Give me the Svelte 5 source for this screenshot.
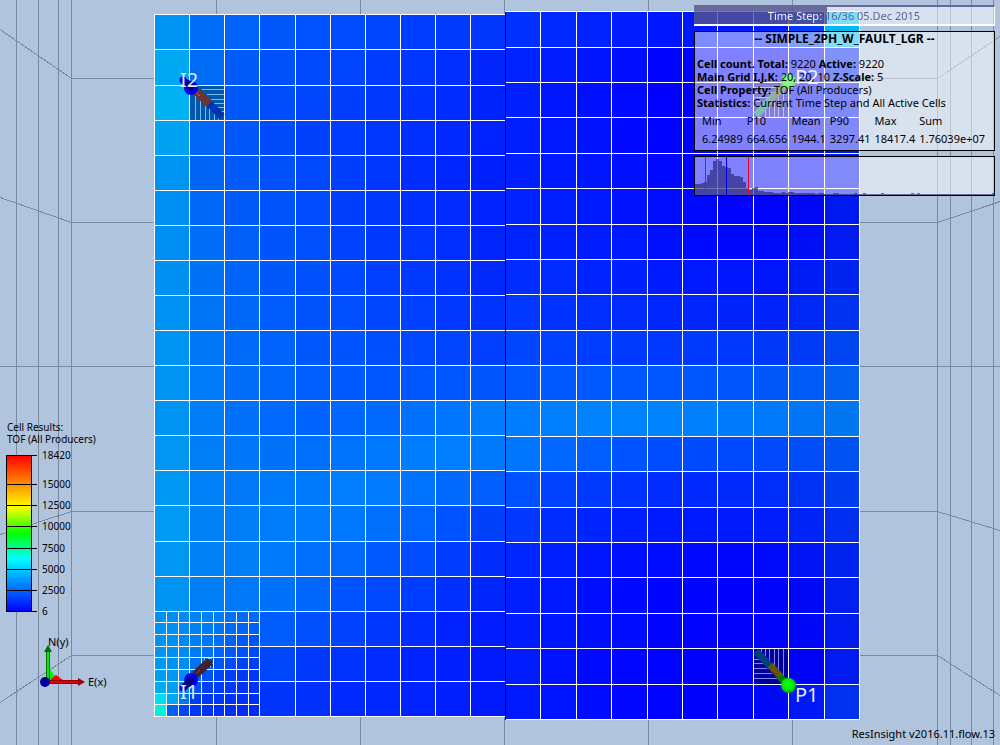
<script>
  const leftX = [154, 189, 224, 259, 295, 330, 365, 400, 435, 470, 505];
  const leftY = [14, 49, 85, 120, 155, 190, 225, 260, 295, 330, 365, 400, 435, 470, 505, 541, 576, 611, 646, 681, 716];
  const rightX = [505, 540, 576, 611, 647, 682, 717, 753, 788, 824, 859];
  const rightY = [11, 47, 82, 117, 153, 188, 224, 259, 294, 330, 365, 400, 436, 471, 507, 542, 577, 613, 648, 684, 719];
  const fineX = [154, 166, 178, 189, 201, 213, 224, 236, 248, 259];
  const fineY = [611, 622, 634, 646, 657, 669, 681, 693, 704, 716];

  const leftCells = [
    [148, 110, 98, 88, 82, 75, 68, 62, 58, 54],
    [168, 108, 90, 80, 72, 68, 60, 54, 46, 38],
    [178, 104, 88, 76, 68, 62, 56, 50, 44, 36],
    [162, 102, 86, 74, 66, 60, 54, 48, 40, 34],
    [148, 100, 90, 80, 72, 62, 54, 44, 38, 32],
    [142, 104, 90, 82, 75, 62, 56, 48, 42, 34],
    [142, 110, 96, 84, 78, 66, 58, 52, 46, 38],
    [144, 114, 100, 88, 80, 72, 64, 58, 50, 42],
    [146, 118, 104, 92, 84, 78, 70, 64, 56, 52],
    [148, 120, 106, 98, 88, 84, 78, 72, 68, 64],
    [148, 122, 110, 102, 94, 90, 86, 86, 86, 86],
    [148, 124, 112, 104, 100, 102, 106, 112, 118, 124],
    [150, 126, 118, 114, 112, 116, 120, 124, 126, 122],
    [152, 128, 120, 120, 122, 126, 122, 116, 106, 94],
    [154, 130, 126, 124, 124, 120, 112, 100, 84, 66],
    [150, 130, 126, 122, 112, 104, 90, 76, 60, 44],
    [148, 126, 120, 114, 102, 84, 72, 62, 48, 38],
    [146, 126, 106, 92, 78, 66, 54, 44, 34, 28],
    [150, 110, 70, 70, 56, 50, 42, 36, 32, 26],
    [160, 60, 50, 52, 48, 42, 38, 34, 30, 26]
  ];
  const rightCells = [
    [48, 40, 34, 28, 22, 24, 24, 34, 60, 185],
    [36, 28, 20, 14, 4, 4, 2, 4, 14, 36],
    [32, 22, 16, 10, 0, 0, 0, 0, 8, 22],
    [30, 24, 18, 8, 2, 0, 0, 0, 6, 18],
    [32, 26, 22, 16, 8, 4, 2, 2, 6, 20],
    [36, 30, 26, 18, 14, 8, 4, 2, 8, 24],
    [36, 32, 28, 24, 16, 10, 8, 10, 14, 26],
    [44, 42, 36, 32, 26, 24, 22, 22, 28, 36],
    [56, 50, 46, 42, 38, 38, 36, 36, 40, 50],
    [70, 66, 62, 58, 56, 58, 56, 56, 60, 70],
    [88, 90, 88, 86, 86, 88, 86, 88, 92, 96],
    [124, 128, 130, 130, 130, 128, 122, 120, 118, 118],
    [118, 104, 94, 84, 76, 74, 72, 72, 76, 82],
    [82, 66, 58, 50, 44, 42, 42, 44, 50, 60],
    [56, 44, 36, 30, 26, 24, 24, 28, 36, 46],
    [38, 30, 22, 16, 12, 8, 6, 10, 20, 36],
    [30, 24, 14, 8, 4, 4, 0, 2, 8, 30],
    [28, 22, 16, 12, 4, 2, 0, 2, 6, 26],
    [28, 18, 10, 6, 2, 0, 0, 0, 2, 26],
    [26, 20, 12, 6, 2, 0, 2, 8, 24, 48]
  ];
  const fineCells = [
    [146, 142, 138, 132, 128, 124, 112, 108, 104],
    [146, 142, 138, 130, 124, 118, 106, 100, 96],
    [146, 142, 136, 126, 118, 110, 98, 90, 84],
    [148, 144, 138, 122, 112, 100, 88, 80, 74],
    [152, 146, 140, 112, 98, 86, 76, 66, 60],
    [158, 150, 140, 100, 80, 72, 62, 56, 54],
    [172, 160, 140, 80, 64, 60, 56, 52, 50],
    [222, 168, 120, 60, 56, 54, 50, 48, 46],
    [240, 96, 70, 56, 50, 48, 46, 44, 44]
  ];

  const leftBlue = [242, 246, 248, 250, 252, 253, 254, 255, 255, 252];
  const rightBlue = [255, 255, 255, 255, 255, 253, 252, 250, 246, 240];
  const fineBlue = [240, 241, 242, 243, 244, 245, 245, 245, 245];

  const blocks = [
    { xs: leftX, ys: leftY, cells: leftCells, blue: leftBlue },
    { xs: rightX, ys: rightY, cells: rightCells, blue: rightBlue },
    { xs: fineX, ys: fineY, cells: fineCells, blue: fineBlue }
  ];

  const boxVerticals = [16, 38, 58, 71, 216, 360, 504, 648, 792, 937, 950, 971, 993];
  const boxLevels = [
    [29, 78, 36],
    [197, 222, 201],
    [366, 366, 366],
    [534, 511, 530],
    [702, 655, 695]
  ];

  const ticks = [
    [0, '18420'], [29, '15000'], [50, '12500'], [71, '10000'],
    [93, '7500'], [114, '5000'], [135, '2500'], [156, '6']
  ];

  const stats = [
    ['Min', '6.24989'], ['P10', '664.656'], ['Mean', '1944.1'],
    ['P90', '3297.41'], ['Max', '18417.4'], ['Sum', '1.76039e+07']
  ];

  const dense = [12, 12, 13, 14, 21, 26, 35, 37, 35, 30, 29, 28, 22, 20, 20, 19, 14, 8, 6, 8, 9, 5, 5, 4, 4, 4, 3, 3, 3, 4, 3, 4, 4, 3, 3, 3, 3, 3, 3, 3, 2, 3, 3, 2, 2, 2, 3, 3];
  const sparse = [53, 56, 62, 72, 74, 99];
  const bars = Array.from({ length: 100 }, (_, i) => dense[i] ?? (sparse.includes(i) ? 3 : 2));

  const step = 16;
  const steps = 36;
  const done = (step / steps) * 100;
</script>

<main class="view">
  <svg class="scene" viewBox="0 0 1000 745" role="img" aria-label="Reservoir grid seen from above">
    <defs>
      <radialGradient id="prod" cx="45%" cy="40%" r="60%">
        <stop offset="0" stop-color="#19ff19" />
        <stop offset="0.6" stop-color="#00ea00" />
        <stop offset="1" stop-color="#00b000" />
      </radialGradient>
    </defs>

    <g class="box">
      {#each boxVerticals as x}
        <path d="M{x + 0.5} 0V745" />
      {/each}
      {#each boxLevels as [a, y, b]}
        <path d="M0 {a + 0.5}L71.5 {y + 0.5}H937.5L1000 {b + 0.5}" />
      {/each}
    </g>

    {#each blocks as block}
      <g shape-rendering="crispEdges">
        {#each block.cells as row, r}
          {#each row as green, c}
            <rect
              x={block.xs[c]}
              y={block.ys[r]}
              width={block.xs[c + 1] - block.xs[c]}
              height={block.ys[r + 1] - block.ys[r]}
              fill="rgb(0,{green},{green === 240 ? 218 : block.blue[c]})"
            />
          {/each}
        {/each}
      </g>
    {/each}

    <g shape-rendering="crispEdges">
      <rect x="190" y="86" width="34" height="34" fill="#0056a8" />
      <path class="mesh ice" d="M195.5 96V120M200.5 100V120M205.5 104V120M209.5 109V120M214.5 113V120M218.5 118V120M202 89.5H224M207 94.5H224M211 99.5H224M214 103.5H224M218 107.5H224M222 111.5H224" />
      <rect x="754" y="649" width="34" height="35" fill="#00009c" />
      <path class="mesh" d="M761.5 649V654M765.5 649V658M769.5 649V662M774.5 649V667M778.5 649V672M783.5 649V676M754 659.5H759M754 663.5H763M754 668.5H767M754 673.5H772M754 678.5H777" />
      <rect x="754" y="83" width="34" height="34" fill="#0000b0" />
      <path class="mesh" d="M765.5 110V117M769.5 106V117M774.5 101V117M778.5 97V117M783.5 92V117M754 87.5H779M754 92.5H775M754 97.5H770M754 101.5H766M754 106.5H762" />
      <rect x="204" y="658" width="9" height="10" fill="#0a3fae" />
      <path class="mesh ice" d="M204.5 657V661M206 658.5H212M209 663.5H213M210.5 664V668" />
    </g>

    {#each blocks as block}
      <g class="grid">
        {#each block.xs as x}
          <path d="M{x + 0.5} {block.ys[0]}V{block.ys[block.ys.length - 1] + 1}" />
        {/each}
        {#each block.ys as y}
          <path d="M{block.xs[0]} {y + 0.5}H{block.xs[block.xs.length - 1] + 1}" />
        {/each}
      </g>
    {/each}
    <path d="M505.5 12V720" stroke="#00001c" shape-rendering="crispEdges" />

    <g fill="none" stroke-width="7">
      <path d="M208 102L222 117" stroke="#0032b4" />
      <path d="M196 91L209 104" stroke="#6b3430" stroke-width="8" />
      <path d="M197 93L200 96" stroke="#b06a5c" stroke-width="1" />
      <path d="M183 80L191 88" stroke="#0000c8" />
      <circle cx="183" cy="80" r="3.5" fill="#0000e6" />
      <circle cx="191" cy="88" r="7" fill="#0000f0" />
      <path d="M186 82L193 89" stroke="#000078" />

      <path d="M195 675L210 661" stroke="#44202f" stroke-width="8" />
      <path d="M197 673L200 670" stroke="#9a4c74" stroke-width="1" />
      <circle cx="183" cy="688" r="3.5" fill="#0000e6" />
      <circle cx="191" cy="680" r="7" fill="#0000f0" />
      <path d="M184 687L193 679" stroke="#000078" />

      <path d="M756 651L771 667" stroke="#00407c" />
      <path d="M770 665L781 677" stroke="#625500" />
      <path d="M779 676L786 683" stroke="#008000" />
      <circle cx="788.5" cy="685.5" r="7.5" fill="url(#prod)" />

      <path d="M756 115L771 99" stroke="#007c78" />
      <path d="M771 99L788 82" stroke="#2c5a3c" />
      <circle cx="788.5" cy="81.5" r="7.5" fill="url(#prod)" />
    </g>

    <g class="well">
      <text x="180" y="87">I2</text>
      <text x="180" y="699">I1</text>
      <text x="795" y="702">P1</text>
      <text x="795" y="84">P2</text>
    </g>
  </svg>

  <div class="info">
    <div
      class="progress"
      role="progressbar"
      aria-label="Time step"
      aria-valuemin="0"
      aria-valuemax={steps}
      aria-valuenow={step}
      style="--done: {done}%"
    >
      <span>Time Step: 16/36 05.Dec 2015</span>
    </div>

    <section class="card">
      <h1>-- SIMPLE_2PH_W_FAULT_LGR --</h1>
      <p><b>Cell count. Total:</b> 9220 <b>Active:</b> 9220</p>
      <p><b>Main Grid I,J,K:</b> 20, 20, 10 <b>Z-Scale:</b> 5</p>
      <p><b>Cell Property:</b> TOF (All Producers)</p>
      <p><b>Statistics:</b> Current Time Step and All Active Cells</p>
      <table>
        <thead>
          <tr>{#each stats as [name]}<th scope="col">{name}</th>{/each}</tr>
        </thead>
        <tbody>
          <tr>{#each stats as [, value]}<td>{value}</td>{/each}</tr>
        </tbody>
      </table>
    </section>

    <svg class="histogram" viewBox="0 0 299 38" preserveAspectRatio="none" role="img" aria-label="Histogram">
      {#each bars as height, i}
        <rect x={i * 3} y={39 - height} width="3" height={height} fill="#1a1a6a" fill-opacity="0.59" />
      {/each}
      <rect x="10" y="0" width="1" height="38" fill="#f00014" />
      <rect x="31" y="0" width="1" height="38" fill="#0000e6" />
      <rect x="53" y="0" width="1" height="38" fill="#f00014" />
    </svg>
  </div>

  <section class="legend">
    <h2>Cell Results:<br />TOF (All Producers)</h2>
    <svg viewBox="0 0 90 170" width="90" height="170" role="img" aria-label="Colour scale">
      <defs>
        <linearGradient id="ramp" x1="0" y1="0" x2="0" y2="1">
          <stop offset="0" stop-color="#f00" />
          <stop offset="0.33" stop-color="#ff0" />
          <stop offset="0.5" stop-color="#0f0" />
          <stop offset="0.66" stop-color="#0ff" />
          <stop offset="1" stop-color="#00f" />
        </linearGradient>
      </defs>
      <g shape-rendering="crispEdges">
        <rect x="0.5" y="7.5" width="25" height="156" fill="url(#ramp)" stroke="#000" />
        {#each ticks as [y]}
          <path d="M0 {y + 7.5}H31" stroke="#000" />
        {/each}
      </g>
      {#each ticks as [y, label]}
        <text x="36" y={y + 11}>{label}</text>
      {/each}
    </svg>
  </section>

  <svg class="axes" viewBox="0 0 80 60" width="80" height="60" role="img" aria-label="Axis cross">
    <path d="M12 29L18 37L12 40Z" fill="#00f21a" />
    <path d="M18 35L25 40L12 40Z" fill="#f00" />
    <path d="M10 40V12" stroke="#007800" stroke-width="4" />
    <path d="M10 40V12" stroke="#00e61e" stroke-width="2" />
    <path d="M10 5L14 12H6Z" fill="#006e00" />
    <path d="M11 42H40" stroke="#960000" stroke-width="4" />
    <path d="M11 42H40" stroke="#e60000" stroke-width="2" />
    <path d="M47 42L40 38V46Z" fill="#960000" />
    <circle cx="7" cy="42" r="5" fill="#0000b4" />
    <text class="z" x="4" y="46">Z</text>
    <text x="10" y="6">N(y)</text>
    <text x="50" y="46">E(x)</text>
  </svg>

  <footer>ResInsight v2016.11.flow.13</footer>
</main>

<style>
  .view {
    position: relative;
    height: 100vh;
    overflow: hidden;
    background: #b0c4de;
    color: #000;
    font-family: "Noto Sans", sans-serif;
    font-size: 11px;
    line-height: 13px;
  }

  .scene {
    display: block;
    width: 100%;
    height: 100%;
  }

  .box path {
    fill: none;
    stroke: #7b899c;
    shape-rendering: crispEdges;
  }

  .grid path {
    stroke: #fff;
    shape-rendering: crispEdges;
  }

  .mesh {
    stroke: #8484f0;
  }

  .ice {
    stroke: #7cb8f0;
  }

  .well {
    fill: #e4e8f6;
    font-size: 20px;
  }

  .info {
    position: absolute;
    top: 5px;
    right: 5px;
    display: flex;
    flex-direction: column;
    gap: 5px;
    width: 301px;
  }

  .progress {
    box-sizing: border-box;
    height: 21px;
    border-top: 2px solid #68689f;
    border-bottom: 2px solid #fff;
    border-right: 1px solid #fff;
    background: linear-gradient(
      90deg,
      rgb(85 85 140 / 0.8) var(--done),
      rgb(255 255 255 / 0.5) var(--done)
    );
    background-clip: padding-box;
    text-align: center;
  }

  .progress span {
    display: block;
    line-height: 18px;
    color: transparent;
    background: linear-gradient(90deg, #fff var(--done), #5c5c9c var(--done));
    background-clip: text;
  }

  .card {
    box-sizing: border-box;
    height: 120px;
    border: 1px solid #000;
    padding: 0 2px;
    background: rgb(255 255 255 / 0.5);
    white-space: nowrap;
  }

  h1,
  h2,
  p {
    margin: 0;
    font-size: inherit;
  }

  h1 {
    margin-bottom: 12px;
    font-size: 12px;
    text-align: center;
  }

  h2 {
    font-weight: 400;
    line-height: 12px;
  }

  table {
    margin: 3px 0 0 5px;
    border-collapse: collapse;
  }

  th,
  td {
    padding: 0 4px 0 0;
    text-align: left;
    font-weight: 400;
    line-height: 18px;
  }

  .histogram {
    box-sizing: border-box;
    width: 100%;
    height: 40px;
    border: 1px solid #000;
    background: rgb(255 255 255 / 0.5);
    shape-rendering: crispEdges;
  }

  .legend {
    position: absolute;
    left: 6px;
    bottom: 127px;
    font-size: 10px;
  }

  .legend svg {
    display: block;
    margin-top: 3px;
  }

  .legend h2 {
    padding-left: 1px;
  }

  .axes {
    position: absolute;
    left: 38px;
    bottom: 45px;
    overflow: visible;
  }

  .z {
    fill: #000046;
    font-size: 10px;
  }

  footer {
    position: absolute;
    right: 5px;
    bottom: 5px;
  }
</style>
